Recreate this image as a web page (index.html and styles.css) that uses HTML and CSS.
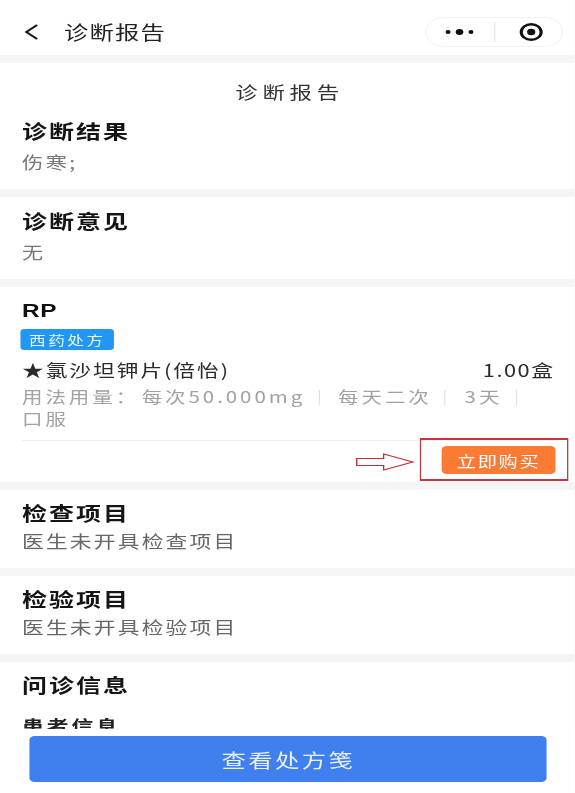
FILE: index.html
```html
<!DOCTYPE html>
<html lang="zh-CN">
<head>
<meta charset="utf-8">
<title>诊断报告</title>
<link rel="stylesheet" href="styles.css">
</head>
<body>
<div class="page">
  <header class="nav">
    <svg class="back" width="11" height="16" viewBox="0 0 11 16"><path d="M10 1 1.500 8l8.500 7" fill="none" stroke="#1a1a1a" stroke-width="1.800"/></svg>
    <span class="nav-title">诊断报告</span>
    <div class="capsule">
      <svg class="dots" width="22" height="8" viewBox="0 0 22 8"><circle cx="2" cy="4" r="2" fill="#111"/><circle cx="11" cy="4" r="3" fill="#111"/><circle cx="20" cy="4" r="2" fill="#111"/></svg>
      <i class="cap-line"></i>
      <svg class="eye" width="20" height="20" viewBox="0 0 20 20"><circle cx="10" cy="10" r="7.800" fill="none" stroke="#111" stroke-width="2.400"/><circle cx="10" cy="10" r="3.200" fill="#111"/></svg>
    </div>
  </header>

  <section class="card first">
    <h1 class="report-title">诊断报告</h1>
    <h2 class="head">诊断结果</h2>
    <p class="muted">伤寒;</p>
  </section>

  <section class="card opinion">
    <h2 class="head">诊断意见</h2>
    <p class="muted">无</p>
  </section>

  <section class="card rp">
    <h2 class="rp-title">RP</h2>
    <span class="tag">西药处方</span>
    <div class="drug"><span>★氯沙坦钾片(倍怡)</span><span class="qty">1.00盒</span></div>
    <p class="usage">用法用量：<span class="dose">每次50.000mg</span><i class="sep"></i>每天二次<i class="sep"></i>3天<i class="sep"></i><br>口服</p>
    <div class="actions">
      <button class="buy">立即购买</button>
      <i class="red-box"></i>
      <svg class="arrow" width="46" height="18" viewBox="0 0 46 18"><path d="M.7 5.500h21V1L44.500 9 21.700 17v-4.500H.7z" fill="#fff" stroke="#c0303a" stroke-width="1.100"/></svg>
    </div>
  </section>

  <section class="card plain">
    <h2 class="head">检查项目</h2>
    <p class="note">医生未开具检查项目</p>
  </section>

  <section class="card plain">
    <h2 class="head">检验项目</h2>
    <p class="note">医生未开具检验项目</p>
  </section>

  <section class="card last">
    <h2 class="head">问诊信息</h2>
    <h3 class="sub">患者信息</h3>
  </section>

  <footer class="footer">
    <button class="rx">查看处方笺</button>
  </footer>
</div>
</body>
</html>
```
FILE: styles.css
```css
* { box-sizing: border-box; }
html, body { margin: 0; padding: 0; height: 793px; overflow: hidden; background: #fff; }
body { font-family: "Noto Sans CJK SC", "Liberation Sans", sans-serif; color: #1c1c1c; }

/* The screenshot is a phone page stretched sideways by 1.28 */
.page { position: relative; width: 449.400px; height: 793px; overflow: hidden; display: flex; flex-direction: column; gap: 8px; background: #f5f5f5; transform: scaleX(1.28); transform-origin: left top; filter: blur(.3px); }
h1, h2, h3, p { margin: 0; font-weight: 400; }

.nav { height: 55px; flex: none; background: #fff; display: flex; align-items: center; padding: 9px 9.400px 0 18.500px; }
.back { flex: none; }
.nav-title { margin-left: 20.500px; font-size: 19px; letter-spacing: .9px; color: #222; line-height: 26px; }
.capsule { margin-left: auto; width: 108px; height: 30px; border: 1px solid #f3f3f3; border-radius: 15px; display: flex; align-items: center; }
.dots { margin-left: 15px; }
.cap-line { width: 1px; height: 20px; background: #e8e8e8; margin-left: 16px; }
.eye { margin-left: 18px; }

.card { background: #fff; padding: 0 17.200px; flex: none; }
.first { height: 126px; padding-top: 16px; }
.report-title { text-align: center; font-size: 17.500px; line-height: 26px; letter-spacing: 3.700px; color: #333; padding-left: 3px; }
.head { font-size: 19.500px; line-height: 26px; font-weight: 700; letter-spacing: 1.600px; color: #151515; }
.first .head { margin-top: 13px; }
.muted { margin-top: 7px; font-size: 16.500px; line-height: 22px; letter-spacing: 2px; color: #777; }
.opinion { height: 82px; padding-top: 11px; }

.rp { height: 195px; padding-top: 12px; }
.rp-title { font-family: "Liberation Sans", sans-serif; font-size: 19px; font-weight: 700; line-height: 24px; letter-spacing: .5px; color: #111; }
.tag { display: block; width: 72.500px; height: 21px; margin-top: 6px; margin-left: -.8px; border-radius: 3px; background: #2196f3; color: #eaf5ff; font-size: 13px; line-height: 21px; letter-spacing: 2px; text-align: center; }
.drug { display: flex; justify-content: space-between; margin-top: 8px; font-size: 17px; line-height: 24px; letter-spacing: 1.500px; color: #2a2a2a; }
.qty { letter-spacing: 1.200px; margin-right: -1px; }
.usage { margin-top: 3px; font-size: 16px; line-height: 22px; letter-spacing: 2.300px; color: #a2a2a2; white-space: nowrap; }
.dose { margin-left: 2px; }
.sep { display: inline-block; width: 1px; height: 15px; background: #e2e2e2; margin: 0 14.500px 0 10.200px; vertical-align: -2px; }
.actions { position: relative; margin-top: 11px; border-top: 1px solid #efefef; height: 43px; }
.buy { position: absolute; right: -1.500px; top: 5px; width: 88.300px; height: 28px; border: 0; border-radius: 4px; background: #fb7a34; color: #fff; font: inherit; font-size: 15px; letter-spacing: 1.400px; padding: 0; }
.red-box { position: absolute; right: -11.700px; top: -3px; width: 115.600px; height: 43px; border: 2px solid #c23542; border-width: 2px 1.500px; }
.arrow { position: absolute; right: 108.600px; top: 12px; }

.plain { height: 78px; padding-top: 10px; }
.note { margin-top: 3px; font-size: 17px; line-height: 24px; letter-spacing: 1.700px; color: #666; }
.last { flex: 1; padding-top: 10px; }
.sub { margin-top: 16px; font-size: 17px; font-weight: 700; line-height: 24px; letter-spacing: 2.300px; color: #222; }

.footer { position: absolute; left: 0; right: 0; bottom: 3px; height: 61px; background: #fff; padding: 7px 22.300px 0 23.400px; }
.rx { display: block; width: 100%; height: 46px; border: 0; border-radius: 4px; background: #4080ee; color: #e9f0ff; font: inherit; font-size: 19px; letter-spacing: 1.900px; padding: 0; }
```
